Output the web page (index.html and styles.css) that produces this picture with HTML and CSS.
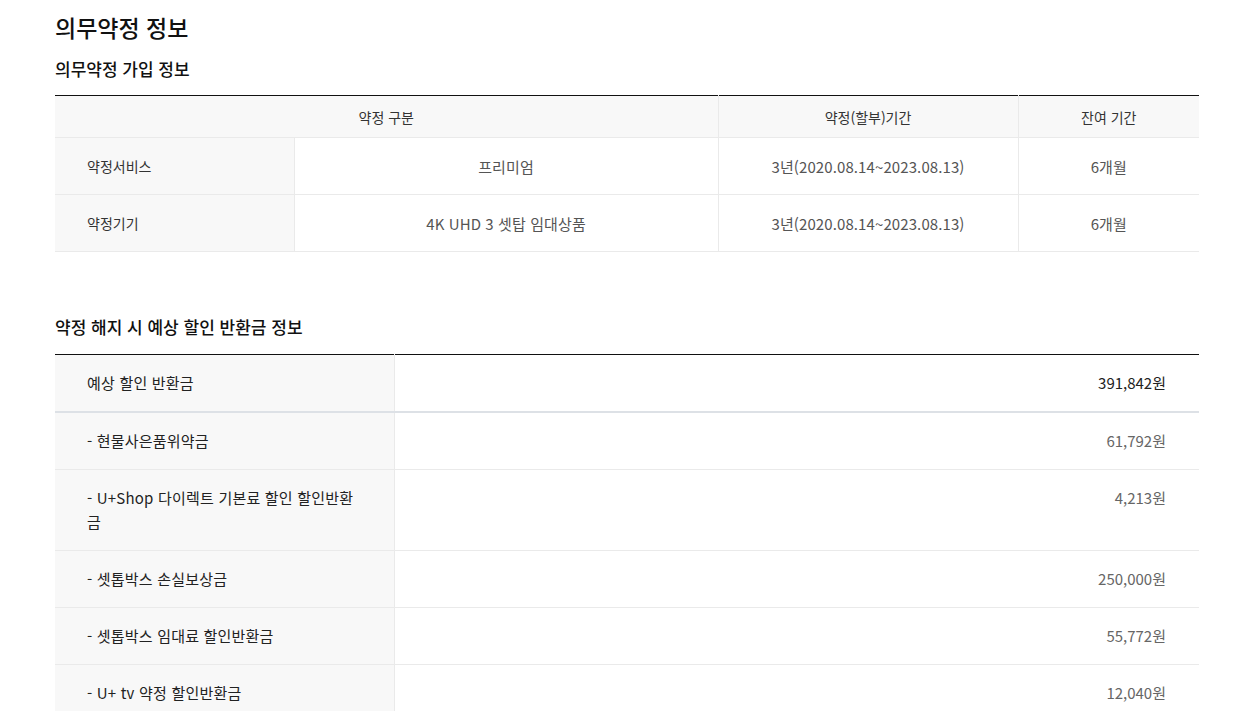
FILE: index.html
```html
<!DOCTYPE html>
<html lang="ko">
<head>
    <meta charset="UTF-8">
    <meta name="viewport" content="width=device-width, initial-scale=1.0">
    <title>의무약정 정보</title>
    <link rel="stylesheet" href="styles.css">
</head>
<body>

    <div class="wrap">
        <h1 class="page-title">의무약정 정보</h1>

        <!-- 가입 정보 -->
        <h2 class="sub-title">의무약정 가입 정보</h2>
        <table class="tbl tbl-join">
            <colgroup>
                <col class="c1">
                <col class="c2">
                <col class="c3">
                <col class="c4">
            </colgroup>
            <thead>
                <tr>
                    <th colspan="2">약정 구분</th>
                    <th>약정(할부)기간</th>
                    <th>잔여 기간</th>
                </tr>
            </thead>
            <tbody>
                <tr>
                    <th class="row-head">약정서비스</th>
                    <td>프리미엄</td>
                    <td>3년(2020.08.14~2023.08.13)</td>
                    <td>6개월</td>
                </tr>
                <tr>
                    <th class="row-head">약정기기</th>
                    <td>4K UHD 3 셋탑 임대상품</td>
                    <td>3년(2020.08.14~2023.08.13)</td>
                    <td>6개월</td>
                </tr>
            </tbody>
        </table>

        <!-- 반환금 정보 -->
        <h2 class="sub-title sub-title-gap">약정 해지 시 예상 할인 반환금 정보</h2>
        <table class="tbl tbl-refund">
            <colgroup>
                <col class="r1">
                <col class="r2">
            </colgroup>
            <tbody>
                <tr class="total">
                    <th>예상 할인 반환금</th>
                    <td>391,842원</td>
                </tr>
                <tr>
                    <th>- 현물사은품위약금</th>
                    <td>61,792원</td>
                </tr>
                <tr>
                    <th>- U+Shop 다이렉트 기본료 할인 할인반환금</th>
                    <td>4,213원</td>
                </tr>
                <tr>
                    <th>- 셋톱박스 손실보상금</th>
                    <td>250,000원</td>
                </tr>
                <tr>
                    <th>- 셋톱박스 임대료 할인반환금</th>
                    <td>55,772원</td>
                </tr>
                <tr>
                    <th>- U+ tv 약정 할인반환금</th>
                    <td>12,040원</td>
                </tr>
            </tbody>
        </table>
    </div>

</body>
</html>
```

FILE: styles.css
```css
/* Base */
body {
    margin: 0;
    padding: 0;
    font-family: "Noto Sans CJK KR", "Noto Sans", sans-serif;
    color: #222;
    background: #fff;
}

.wrap {
    width: 1144px;
    padding: 10px 0 0 55px;
}

/* Titles */
.page-title {
    margin: 0;
    font-size: 23px;
    line-height: 34px;
    font-weight: 500;
    color: #111;
}

.sub-title {
    margin: 13px 0 14px;
    font-size: 17px;
    line-height: 24px;
    font-weight: 500;
    color: #111;
}

.sub-title-gap {
    margin-top: 63px;
    margin-bottom: 15px;
}

/* Tables */
.tbl {
    width: 100%;
    border-collapse: collapse;
    table-layout: fixed;
    border-top: 1px solid #111;
}

.tbl th,
.tbl td {
    border-bottom: 1px solid #eaeaea;
    font-weight: 400;
}

/* 가입 정보 table */
.tbl-join .c1 { width: 239px; }
.tbl-join .c2 { width: 424px; }
.tbl-join .c3 { width: 300px; }
.tbl-join .c4 { width: 181px; }

.tbl-join th,
.tbl-join td {
    border-left: 1px solid #eaeaea;
    text-align: center;
}

.tbl-join th:first-child,
.tbl-join td:first-child {
    border-left: 0;
}

.tbl-join thead th {
    height: 41px;
    padding: 0;
    background: #f8f8f8;
    font-size: 14px;
    color: #333;
}

.tbl-join tbody th,
.tbl-join tbody td {
    height: 56px;
    padding: 0;
}

.tbl-join .row-head {
    background: #f8f8f8;
    text-align: left;
    padding-left: 32px;
    font-size: 14px;
    color: #333;
}

.tbl-join td {
    font-size: 15px;
    letter-spacing: 0.1px;
    color: #555;
}

/* 반환금 table */
.tbl-refund .r1 { width: 339px; }
.tbl-refund .r2 { width: 805px; }

.tbl-refund th {
    background: #f8f8f8;
    border-right: 1px solid #eaeaea;
    padding: 16px 39px 16px 32px;
    text-align: left;
    font-size: 15px;
    letter-spacing: 0.2px;
    line-height: 24px;
    color: #222;
}

.tbl-refund td {
    padding: 16px 33px 16px 0;
    text-align: right;
    vertical-align: top;
    font-size: 15px;
    line-height: 24px;
    color: #666;
}

.tbl-refund .total th,
.tbl-refund .total td {
    border-bottom: 2px solid #dde1e6;
}

.tbl-refund .total td {
    color: #222;
}
```
